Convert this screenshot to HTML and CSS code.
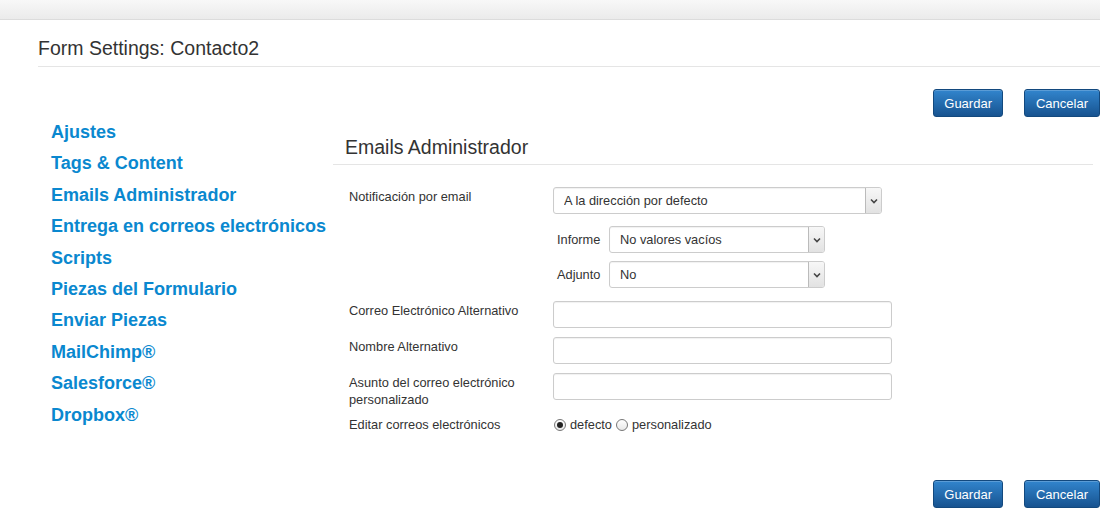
FILE: index.html
```html
<!DOCTYPE html>
<html lang="es">
<head>
  <meta charset="UTF-8">
  <title>Form Settings: Contacto2</title>
  <link rel="stylesheet" href="styles.css">
</head>
<body>
  <div class="topbar"></div>

  <div class="page">
    <h1 class="page-title">Form Settings: Contacto2</h1>

    <div class="actions">
      <button class="btn">Guardar</button>
      <button class="btn">Cancelar</button>
    </div>

    <div class="layout">
      <nav class="sidenav">
        <a href="#">Ajustes</a>
        <a href="#">Tags &amp; Content</a>
        <a href="#">Emails Administrador</a>
        <a href="#">Entrega en correos electrónicos</a>
        <a href="#">Scripts</a>
        <a href="#">Piezas del Formulario</a>
        <a href="#">Enviar Piezas</a>
        <a href="#">MailChimp®</a>
        <a href="#">Salesforce®</a>
        <a href="#">Dropbox®</a>
      </nav>

      <section class="content">
        <h2 class="section-title">Emails Administrador</h2>

        <div class="form">
          <div class="row row-first">
            <label class="label">Notificación por email</label>
            <div class="field">
              <div class="select select-wide">
                <select><option>A la dirección por defecto</option></select>
                <span class="arrow"><svg width="8" height="6" viewBox="0 0 8 6"><path d="M1 1.5 L4 4.5 L7 1.5" fill="none" stroke="#444" stroke-width="1.6"/></svg></span>
              </div>
            </div>
          </div>

          <div class="subrow sub-first">
            <span class="sublabel">Informe</span>
            <div class="select select-small">
              <select><option>No valores vacíos</option></select>
              <span class="arrow"><svg width="8" height="6" viewBox="0 0 8 6"><path d="M1 1.5 L4 4.5 L7 1.5" fill="none" stroke="#444" stroke-width="1.6"/></svg></span>
            </div>
          </div>

          <div class="subrow">
            <span class="sublabel">Adjunto</span>
            <div class="select select-small">
              <select><option>No</option></select>
              <span class="arrow"><svg width="8" height="6" viewBox="0 0 8 6"><path d="M1 1.5 L4 4.5 L7 1.5" fill="none" stroke="#444" stroke-width="1.6"/></svg></span>
            </div>
          </div>

          <div class="row row-gap">
            <label class="label">Correo Electrónico Alternativo</label>
            <input class="input" type="text">
          </div>

          <div class="row">
            <label class="label">Nombre Alternativo</label>
            <input class="input" type="text">
          </div>

          <div class="row row-tall">
            <label class="label">Asunto del correo electrónico personalizado</label>
            <input class="input" type="text">
          </div>

          <div class="row row-radio">
            <label class="label">Editar correos electrónicos</label>
            <div class="radios">
              <label><input type="radio" name="edit" checked> defecto</label>
              <label><input type="radio" name="edit"> personalizado</label>
            </div>
          </div>
        </div>
      </section>
    </div>

    <div class="actions actions-bottom">
      <button class="btn">Guardar</button>
      <button class="btn">Cancelar</button>
    </div>
  </div>
</body>
</html>
```

FILE: styles.css
```css
* { margin: 0; padding: 0; box-sizing: border-box; }
body { font-family: "Liberation Sans", Arial, sans-serif; background: white; color: #333; overflow: hidden; }

.topbar {
  height: 20px;
  background: linear-gradient(#f8f8f8, #ebebeb);
  border-bottom: 1px solid #dcdcdc;
}

.page { padding-left: 38px; }

.page-title {
  font-size: 19.5px;
  font-weight: normal;
  color: #333;
  line-height: 22px;
  padding-top: 17px;
  padding-bottom: 7px;
  border-bottom: 1px solid #e5e5e5;
}

.actions {
  display: flex;
  justify-content: flex-end;
  gap: 21px;
  margin-top: 22px;
}

.actions-bottom { margin-top: 38px; }

.btn {
  font-family: inherit;
  font-size: 13px;
  color: white;
  height: 28px;
  padding: 0 10px;
  border: 1px solid #13497e;
  border-radius: 3px;
  background: linear-gradient(#3285cd, #175390);
  box-shadow: inset 0 1px 0 rgba(255, 255, 255, 0.2);
  cursor: pointer;
}

.btn + .btn { padding: 0 11px; }

.layout { display: flex; }

.sidenav {
  width: 295px;
  padding-left: 13px;
  display: flex;
  flex-direction: column;
}

.sidenav a {
  color: #0a88cf;
  font-weight: bold;
  font-size: 18px;
  line-height: 31.4px;
  text-decoration: none;
  white-space: nowrap;
}

.content {
  flex: 1;
  margin-right: 7px;
  padding-top: 18px;
}

.section-title {
  font-size: 19.5px;
  font-weight: normal;
  color: #333;
  line-height: 24px;
  padding-left: 12px;
  padding-bottom: 5px;
  border-bottom: 1px solid #e5e5e5;
}

.form {
  padding-left: 16px;
  padding-top: 22px;
  font-size: 12.8px;
}

.row {
  display: flex;
  align-items: flex-start;
  margin-bottom: 9px;
}

.row-gap { margin-top: 13px; }
.row-tall { margin-bottom: 8px; }

.label {
  width: 204px;
  flex-shrink: 0;
  padding-top: 1px;
  line-height: 17px;
  padding-right: 20px;
}

.select {
  position: relative;
  height: 27px;
}

.select-wide { width: 329px; }
.select-small { width: 216px; }

.select select {
  appearance: none;
  width: 100%;
  height: 100%;
  font-family: inherit;
  font-size: 12.8px;
  color: #333;
  padding-left: 10px;
  border: 1px solid #ccc;
  border-radius: 3px;
  background: white;
  box-shadow: inset 0 1px 1px rgba(0, 0, 0, 0.06);
}

.select .arrow {
  position: absolute;
  top: 1px;
  right: 1px;
  bottom: 1px;
  width: 16px;
  display: flex;
  align-items: center;
  justify-content: center;
  background: linear-gradient(#f7f7f7, #e2e2e2);
  border-left: 1px solid #bbb;
  border-radius: 0 2px 2px 0;
}

.subrow {
  display: flex;
  align-items: center;
  margin-left: 208px;
  margin-bottom: 8px;
}

.sub-first { margin-top: 12px; }

.sublabel { width: 52px; }

.input {
  width: 339px;
  height: 27px;
  border: 1px solid #ccc;
  border-radius: 3px;
  box-shadow: inset 0 1px 1px rgba(0, 0, 0, 0.06);
  font-family: inherit;
  font-size: 12.8px;
}

.row-radio .label { padding-top: 0; }

.radios {
  display: flex;
  gap: 3px;
  line-height: 17px;
}

.radios label {
  display: flex;
  align-items: center;
  gap: 4px;
}

.radios input {
  appearance: none;
  width: 12px;
  height: 12px;
  border: 1px solid #777;
  border-radius: 50%;
  background: linear-gradient(#fff, #e8e8e8);
  display: grid;
  place-items: center;
  margin-left: 1px;
}

.radios input:checked::after {
  content: "";
  width: 6px;
  height: 6px;
  border-radius: 50%;
  background: #222;
}
```
